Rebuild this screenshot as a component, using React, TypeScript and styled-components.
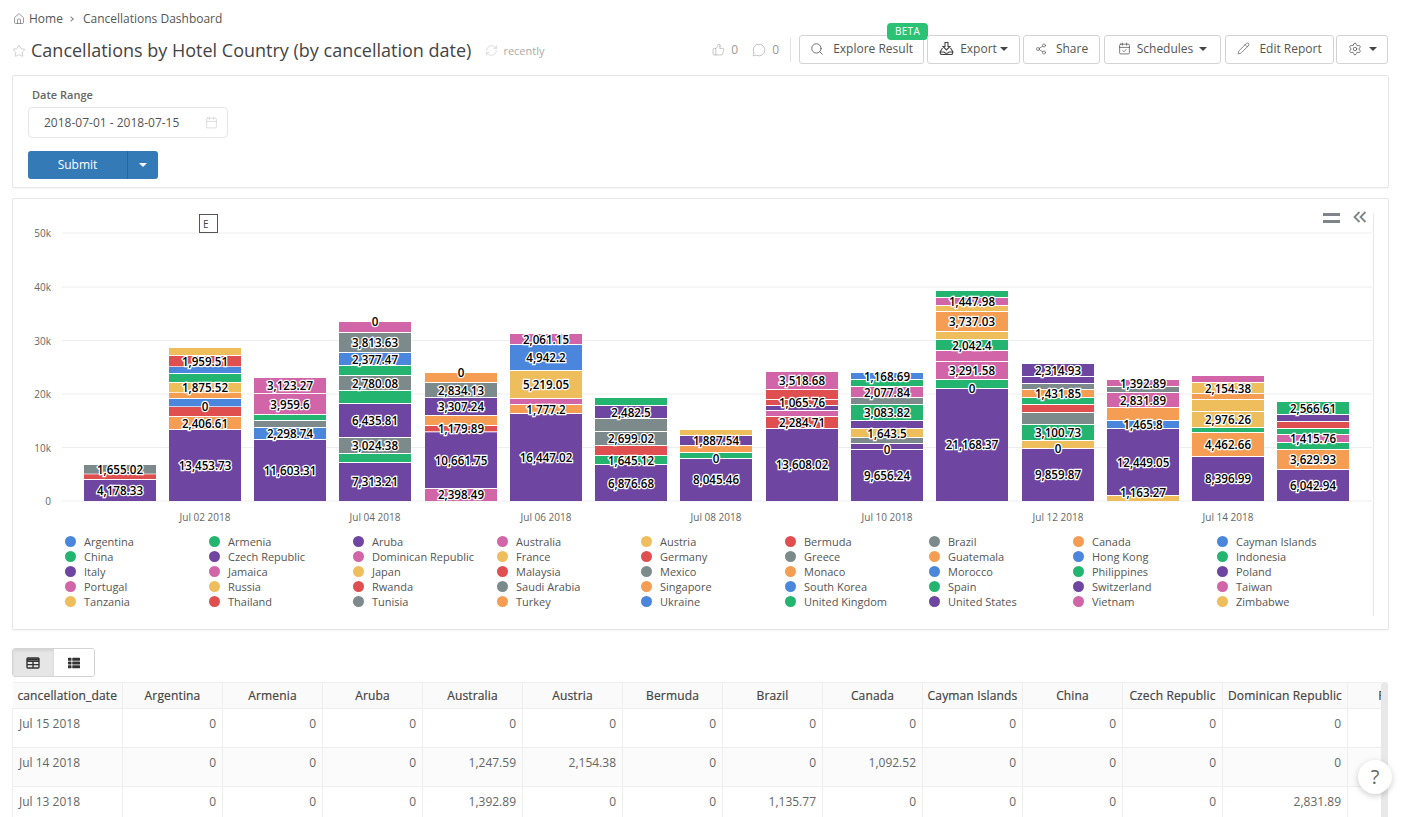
import React from "react";
import styled, { createGlobalStyle } from "styled-components";
import {
  Calendar,
  CalendarCheck,
  Home,
  MessageCircle,
  Pencil,
  RefreshCw,
  Search,
  Settings,
  Share2,
  Star,
  ThumbsUp,
} from "lucide-react";
import { FaThList } from "react-icons/fa";

const colors: Record<string, string> = {
  b: "#4a86dc",
  g: "#23b56f",
  p: "#6e45a0",
  k: "#d264a8",
  y: "#efbe5c",
  r: "#e04f4f",
  s: "#7c8a8c",
  o: "#f59d52",
};
const cycle = ["b", "g", "p", "k", "y", "r", "s", "o"];

const countries = [
  "Argentina", "Armenia", "Aruba", "Australia", "Austria", "Bermuda", "Brazil", "Canada", "Cayman Islands",
  "China", "Czech Republic", "Dominican Republic", "France", "Germany", "Greece", "Guatemala", "Hong Kong", "Indonesia",
  "Italy", "Jamaica", "Japan", "Malaysia", "Mexico", "Monaco", "Morocco", "Philippines", "Poland",
  "Portugal", "Russia", "Rwanda", "Saudi Arabia", "Singapore", "South Korea", "Spain", "Switzerland", "Taiwan",
  "Tanzania", "Thailand", "Tunisia", "Turkey", "Ukraine", "United Kingdom", "United States", "Vietnam", "Zimbabwe",
];

const barX = [84, 169, 254, 339, 425, 510, 595, 680, 766, 851, 936, 1022, 1107, 1192, 1277];

// color, top, bottom, label, label center (all y in 3x units from y=280)
type Seg = [string, number, number, string?, number?];

const bars: Seg[][] = [
  [["s", 555, 581, "1,655.02"], ["r", 583, 597], ["p", 600, 663, "4,178.33"]],
  [["y", 204, 225], ["r", 228, 259, "1,959.51"], ["b", 261, 279], ["g", 282, 306], ["y", 309, 337, "1,875.52"], ["o", 339, 354], ["b", 357, 379, "0", 379], ["r", 381, 408], ["o", 411, 447, "2,406.61", 430], ["p", 450, 663, "13,453.73", 556]],
  [["k", 294, 339, "3,123.27"], ["k", 342, 402, "3,959.6"], ["g", 405, 420], ["s", 423, 441], ["b", 444, 477, "2,298.74"], ["p", 480, 663, "11,603.31"]],
  [["k", 126, 156, "0", 124], ["s", 159, 216, "3,813.63"], ["b", 219, 255, "2,377.47"], ["g", 258, 285], ["s", 288, 330, "2,780.08"], ["g", 333, 369], ["p", 372, 471, "6,435.81"], ["s", 474, 519, "3,024.38"], ["g", 522, 546], ["p", 549, 663, "7,313.21", 604]],
  [["o", 279, 306, "0", 277], ["s", 309, 351, "2,834.13", 331], ["p", 354, 405, "3,307.24", 378], ["o", 408, 435], ["r", 438, 454, "1,179.89", 446], ["p", 457, 624, "10,661.75", 541], ["k", 627, 663, "2,398.49", 642]],
  [["k", 162, 192, "2,061.15"], ["b", 195, 270, "4,942.2"], ["y", 273, 354, "5,219.05"], ["k", 357, 372], ["o", 375, 399, "1,777.2"], ["p", 402, 663, "16,447.02"]],
  [["g", 354, 375], ["p", 378, 414, "2,482.5"], ["s", 417, 453], ["s", 456, 495, "2,699.02"], ["r", 498, 525], ["g", 528, 552, "1,645.12"], ["p", 555, 663, "6,876.68"]],
  [["y", 450, 465], ["p", 468, 495, "1,887.54"], ["o", 498, 516], ["g", 519, 534, "0", 535], ["p", 537, 663, "8,045.46", 598]],
  [["k", 276, 327, "3,518.68"], ["r", 330, 357], ["r", 360, 375, "1,065.76"], ["p", 378, 390], ["k", 393, 408], ["r", 411, 444, "2,284.71", 427], ["p", 447, 663, "13,608.02", 552]],
  [["b", 279, 297, "1,168.69"], ["g", 300, 318], ["k", 321, 351, "2,077.84"], ["s", 354, 372], ["g", 375, 420, "3,083.82"], ["p", 423, 444], ["y", 447, 471, "1,643.5"], ["s", 474, 489], ["p", 492, 507, "0", 508], ["p", 510, 663, "9,656.24", 585]],
  [["g", 33, 51], ["k", 54, 75, "1,447.98", 63], ["y", 78, 93], ["o", 96, 153, "3,737.03"], ["y", 156, 177], ["g", 180, 210, "2,042.4"], ["k", 213, 243], ["k", 246, 297, "3,291.58"], ["g", 300, 324, "0", 325], ["p", 327, 663, "21,168.37", 492]],
  [["p", 252, 288, "2,314.93"], ["p", 291, 309], ["s", 312, 327], ["o", 330, 351, "1,431.85"], ["g", 354, 372], ["r", 375, 396], ["s", 399, 432], ["g", 435, 480, "3,100.73"], ["y", 483, 504, "0", 505], ["p", 507, 663, "9,859.87", 582]],
  [["k", 300, 318, "1,392.89", 310], ["s", 321, 336], ["k", 339, 381, "2,831.89"], ["o", 384, 420], ["b", 423, 444, "1,465.8"], ["p", 447, 645, "12,449.05", 546], ["y", 648, 663, "1,163.27", 638]],
  [["k", 288, 306], ["y", 309, 339, "2,154.38"], ["o", 342, 357], ["y", 360, 393], ["y", 396, 441, "2,976.26"], ["g", 444, 456], ["o", 459, 528, "4,462.66"], ["p", 531, 663, "8,396.99", 595]],
  [["g", 366, 402, "2,566.61"], ["p", 405, 423], ["r", 426, 444], ["g", 447, 462], ["k", 465, 486, "1,415.76"], ["g", 489, 507], ["o", 510, 567, "3,629.93"], ["p", 570, 663, "6,042.94", 615]],
];

const yTicks: [string, number][] = [["50k", 233], ["40k", 287], ["30k", 340.5], ["20k", 394], ["10k", 447.5], ["0", 501]];

const columns = [
  "cancellation_date", "Argentina", "Armenia", "Aruba", "Australia", "Austria", "Bermuda", "Brazil",
  "Canada", "Cayman Islands", "China", "Czech Republic", "Dominican Republic", "France",
];
const colWidths = [110, 100, 100, 100, 100, 100, 100, 100, 100, 100, 100, 100, 125, 100];
const rows = [
  ["Jul 15 2018", "0", "0", "0", "0", "0", "0", "0", "0", "0", "0", "0", "0"],
  ["Jul 14 2018", "0", "0", "0", "1,247.59", "2,154.38", "0", "0", "1,092.52", "0", "0", "0", "0"],
  ["Jul 13 2018", "0", "0", "0", "1,392.89", "0", "0", "1,135.77", "0", "0", "0", "0", "2,831.89"],
];

const GlobalStyle = createGlobalStyle`
  html, body {
    margin: 0;
    height: 100%;
    overflow: hidden;
    background: #fff;
    font-family: "Open Sans", "Liberation Sans", sans-serif;
    font-size: 12px;
    color: #555;
  }
  * { box-sizing: border-box; }
`;

const Page = styled.div`
  position: relative;
  width: 1403px;
  height: 817px;
  overflow: hidden;
  padding: 11px 14px 0 12px;
`;

const Breadcrumb = styled.div`
  height: 16px;
  display: flex;
  align-items: center;
  color: #555;
  svg { color: #666; margin: 0 4px 0 1px; }
`;

const Crumb = styled.span`
  line-height: 16px;
`;

const CrumbSep = styled.span`
  width: 4px;
  height: 4px;
  margin: 0 10px 0 6px;
  border-top: 1px solid #888;
  border-right: 1px solid #888;
  transform: rotate(45deg);
`;

const TitleRow = styled.div`
  height: 29px;
  margin-top: 8px;
  display: flex;
  align-items: center;
  justify-content: space-between;
`;

const TitleGroup = styled.div`
  display: flex;
  align-items: center;
  padding-top: 2px;
`;

const Title = styled.h1`
  margin: 0 14px 0 5px;
  font-size: 18px;
  font-weight: 400;
  line-height: 27px;
  color: #444;
`;

const Recently = styled.span`
  margin-left: 5px;
  font-size: 11px;
  color: #aaa;
`;

const Actions = styled.div`
  display: flex;
  align-items: center;
  padding-right: 1px;
`;

const Stat = styled.span<{ $gap: number }>`
  display: flex;
  align-items: center;
  gap: 6px;
  margin-right: ${(p) => p.$gap}px;
  color: #999;
  font-size: 12px;
`;

const VDivider = styled.span`
  width: 1px;
  height: 24px;
  background: #e0e0e0;
  margin-right: 8px;
`;

const Btn = styled.button<{ $w: number; $gap?: number }>`
  position: relative;
  width: ${(p) => p.$w}px;
  height: 29px;
  margin-right: ${(p) => p.$gap ?? 4}px;
  padding: 0 0 2px;
  display: flex;
  align-items: center;
  justify-content: center;
  gap: 6px;
  background: #fff;
  border: 1px solid #d4d4d4;
  border-radius: 3px;
  color: #555;
  font: 400 12px "Open Sans", sans-serif;
  &:last-child { margin-right: 0; }
`;

const Badge = styled.span`
  position: absolute;
  top: -13px;
  right: -5px;
  width: 41px;
  height: 17px;
  border-radius: 4px;
  background: #2bc275;
  color: #fff;
  font-size: 10px;
  line-height: 17px;
  letter-spacing: 0.3px;
  text-align: center;
`;

const Caret = styled.span<{ $color?: string; $ml?: number }>`
  width: 0;
  height: 0;
  margin-left: ${(p) => p.$ml ?? 0}px;
  border-left: 4px solid transparent;
  border-right: 4px solid transparent;
  border-top: 4px solid ${(p) => p.$color ?? "#444"};
`;

const Card = styled.section`
  position: relative;
  border: 1px solid #e6e6e6;
  border-radius: 2px;
  background: #fff;
  box-shadow: 0 1px 2px rgba(0, 0, 0, 0.04);
`;

const FilterCard = styled(Card)`
  height: 113px;
  margin-top: 11px;
  padding: 12px 15px;
`;

const FieldLabel = styled.label`
  display: block;
  height: 14px;
  margin: 0 0 5px 4px;
  font-size: 11px;
  line-height: 14px;
  font-weight: 600;
  color: #666;
`;

const DateInput = styled.div`
  width: 200px;
  height: 31px;
  padding: 0 9px 1px 15px;
  display: flex;
  align-items: center;
  justify-content: space-between;
  border: 1px solid #e6e6e6;
  border-radius: 4px;
  color: #555;
  svg { color: #ccc; }
`;

const SubmitGroup = styled.div`
  width: 130px;
  height: 28px;
  margin-top: 13px;
  display: flex;
  border-radius: 3px;
  overflow: hidden;
  background: #337ab7;
  color: #fff;
`;

const SubmitLabel = styled.span`
  width: 100px;
  line-height: 28px;
  text-align: center;
  border-right: 1px solid #2a659a;
`;

const SubmitCaret = styled.span`
  flex: 1;
  display: flex;
  align-items: center;
  justify-content: center;
`;

const ChartCard = styled(Card)`
  height: 432px;
  margin-top: 10px;
`;

const ChartSvg = styled.svg`
  display: block;
  width: 1375px;
  height: 335px;
`;

const BarLabel = styled.text`
  font-family: "Open Sans", sans-serif;
  font-size: 11.6px;
  font-weight: 600;
  fill: #000;
  stroke: #fff;
  stroke-width: 2.5px;
  paint-order: stroke;
  text-anchor: middle;
  dominant-baseline: central;
`;

const AxisLabel = styled.text`
  font-family: "Open Sans", sans-serif;
  font-size: 10px;
  fill: #666;
  dominant-baseline: central;
`;

const Legend = styled.ul`
  list-style: none;
  margin: 0;
  padding: 0 0 0 52px;
  display: grid;
  grid-template-columns: repeat(9, 144px);
  grid-auto-rows: 15px;
`;

const LegendItem = styled.li`
  display: flex;
  align-items: center;
  gap: 8px;
  font-size: 11px;
  color: #555;
  white-space: nowrap;
`;

const Dot = styled.span<{ $color: string }>`
  width: 11px;
  height: 11px;
  border-radius: 50%;
  background: ${(p) => p.$color};
`;

const Splitter = styled.div`
  position: absolute;
  left: 1360px;
  top: 14px;
  bottom: 13px;
  width: 1px;
  background: #e8e8e8;
`;

const ChartTools = styled.div`
  position: absolute;
  top: 12px;
  right: 21px;
  display: flex;
  align-items: flex-start;
  gap: 13px;
`;

const Bars = styled.span`
  width: 17px;
  height: 10px;
  margin-top: 2px;
  border-top: 3px solid #7d8588;
  border-bottom: 3px solid #7d8588;
`;

const Marker = styled.div`
  position: absolute;
  left: 186px;
  top: 15px;
  width: 19px;
  height: 19px;
  padding-left: 3px;
  border: 1px solid #555;
  background: #fff;
  font-size: 10px;
  line-height: 19px;
  color: #444;
`;

const ViewTabs = styled.div`
  width: 83px;
  height: 29px;
  margin-top: 18px;
  display: flex;
  border: 1px solid #d4d4d4;
  border-radius: 3px;
  overflow: hidden;
`;

const ViewTab = styled.span<{ $active?: boolean }>`
  flex: 1;
  display: flex;
  align-items: center;
  justify-content: center;
  background: ${(p) => (p.$active ? "#e6e6e6" : "#fff")};
  box-shadow: ${(p) => (p.$active ? "inset 0 2px 3px rgba(0,0,0,0.08)" : "none")};
  color: #333;
`;

const TableArea = styled.div`
  margin-top: 5px;
  display: flex;
`;

const TableClip = styled.div`
  width: 1369px;
  height: 141px;
  overflow: hidden;
`;

const Table = styled.table`
  width: 1435px;
  table-layout: fixed;
  border-collapse: collapse;
`;

const Th = styled.th`
  height: 26px;
  padding: 0 2px;
  background: #fafafa;
  border: 1px solid #eee;
  border-left: none;
  font-size: 12px;
  font-weight: 400;
  letter-spacing: 0.15px;
  color: #444;
  text-align: center;
  white-space: nowrap;
  overflow: hidden;
  -webkit-text-stroke: 0.2px #444;
`;

const Tr = styled.tr<{ $alt?: boolean }>`
  background: ${(p) => (p.$alt ? "#fbfbfb" : "#fff")};
`;

const Td = styled.td<{ $first?: boolean }>`
  height: 39px;
  padding: 6px 6px 0 6px;
  border: 1px solid #eee;
  border-left: ${(p) => (p.$first ? "1px solid #eee" : "none")};
  vertical-align: top;
  text-align: ${(p) => (p.$first ? "left" : "right")};
  font-size: 12px;
  line-height: 18px;
  color: #666;
`;

const ScrollTrack = styled.div`
  width: 7px;
  height: 141px;
  background: #e8e8e8;
  border-radius: 3px 3px 0 0;
`;

const Help = styled.div`
  position: absolute;
  left: 1358px;
  top: 760px;
  width: 34px;
  height: 34px;
  border-radius: 50%;
  background: #fff;
  box-shadow: 0 2px 6px rgba(0, 0, 0, 0.2);
  font-size: 20px;
  line-height: 34px;
  text-align: center;
  color: #666;
`;

function ExportIcon() {
  return (
    <svg width="15" height="15" viewBox="0 0 15 15" fill="none" stroke="#444" strokeWidth="1.1">
      <path d="M6 1.5h3v4h2L7.5 9 4 5.5h2z" />
      <path d="M3.5 7L1 11l1 2.5h11l1-2.5-2.5-4M1 11h4l1.5 1.2h2L10 11h4" />
    </svg>
  );
}

function TableIcon() {
  return (
    <svg width="14" height="12" viewBox="0 0 14 12" fill="none" stroke="#333" strokeWidth="1.4">
      <rect x="1" y="1" width="12" height="10" rx="1" />
      <path d="M1 4.2h12M1 7.6h12M7 4v7" />
      <path d="M1 2.6h12" strokeWidth="2" />
    </svg>
  );
}

function Chart() {
  return (
    <ChartSvg viewBox="13 199 1375 335">
      {yTicks.map(([t, y]) => (
        <g key={t}>
          <line x1={62} x2={1372} y1={y} y2={y} stroke="#eee" />
          <AxisLabel x={51} y={y} textAnchor="end">
            {t}
          </AxisLabel>
        </g>
      ))}
      {bars.map((segs, i) => (
        <g key={i}>
          {segs.map(([c, top, bottom], j) => (
            <rect key={j} x={barX[i]} y={280 + top / 3} width={72} height={(bottom - top) / 3} fill={colors[c]} />
          ))}
        </g>
      ))}
      {bars.map((segs, i) => {
        const x = barX[i] + 36;
        return (
          <g key={i}>
            {segs.map(([, top, bottom, label, at], j) =>
              label ? (
                <BarLabel key={j} x={x} y={280 + (at ?? (top + bottom) / 2) / 3}>
                  {label}
                </BarLabel>
              ) : null
            )}
            {i % 2 === 1 && (
              <AxisLabel x={x} y={517} textAnchor="middle">
                {`Jul ${String(i + 1).padStart(2, "0")} 2018`}
              </AxisLabel>
            )}
          </g>
        );
      })}
    </ChartSvg>
  );
}

export default function App() {
  return (
    <Page>
      <GlobalStyle />
      <Breadcrumb>
        <Home size={12} strokeWidth={1.3} />
        <Crumb>Home</Crumb>
        <CrumbSep />
        <Crumb>Cancellations Dashboard</Crumb>
      </Breadcrumb>

      <TitleRow>
        <TitleGroup>
          <Star size={14} strokeWidth={1.2} color="#bbb" />
          <Title>Cancellations by Hotel Country (by cancellation date)</Title>
          <RefreshCw size={13} strokeWidth={1.2} color="#ccc" />
          <Recently>recently</Recently>
        </TitleGroup>
        <Actions>
          <Stat $gap={14}>
            <ThumbsUp size={13} strokeWidth={1} />0
          </Stat>
          <Stat $gap={11}>
            <MessageCircle size={14} strokeWidth={1} />0
          </Stat>
          <VDivider />
          <Btn $w={125} $gap={3}>
            <Search size={14} strokeWidth={1.4} />
            &nbsp;Explore Result
            <Badge>BETA</Badge>
          </Btn>
          <Btn $w={93} $gap={3}>
            <ExportIcon />
            Export
            <Caret $ml={-3} />
          </Btn>
          <Btn $w={77}>
            <Share2 size={12} strokeWidth={1.3} />
            &nbsp;Share
          </Btn>
          <Btn $w={117}>
            <CalendarCheck size={13} strokeWidth={1.4} />
            Schedules
            <Caret />
          </Btn>
          <Btn $w={109} $gap={2}>
            <Pencil size={13} strokeWidth={1.3} />
            &nbsp;Edit Report
          </Btn>
          <Btn $w={52}>
            <Settings size={14} strokeWidth={1.3} />
            <Caret $ml={1} />
          </Btn>
        </Actions>
      </TitleRow>

      <FilterCard>
        <FieldLabel>Date Range</FieldLabel>
        <DateInput>
          2018-07-01 - 2018-07-15
          <Calendar size={13} strokeWidth={1.2} />
        </DateInput>
        <SubmitGroup>
          <SubmitLabel>Submit</SubmitLabel>
          <SubmitCaret>
            <Caret $color="#fff" />
          </SubmitCaret>
        </SubmitGroup>
      </FilterCard>

      <ChartCard>
        <Chart />
        <Legend>
          {countries.map((name, i) => (
            <LegendItem key={name}>
              <Dot $color={colors[cycle[i % 8]]} />
              {name}
            </LegendItem>
          ))}
        </Legend>
        <Marker>E</Marker>
        <Splitter />
        <ChartTools>
          <Bars />
          <svg width="14" height="12" viewBox="0 0 14 12" fill="none" stroke="#7d8588" strokeWidth="1.8">
            <path d="M6.5 1L1.5 6l5 5M12.5 1l-5 5 5 5" />
          </svg>
        </ChartTools>
      </ChartCard>

      <ViewTabs>
        <ViewTab $active>
          <TableIcon />
        </ViewTab>
        <ViewTab>
          <FaThList size={12} />
        </ViewTab>
      </ViewTabs>

      <TableArea>
        <TableClip>
          <Table>
            <colgroup>
              {colWidths.map((w, i) => (
                <col key={i} width={w} />
              ))}
            </colgroup>
            <thead>
              <tr>
                {columns.map((c) => (
                  <Th key={c}>{c}</Th>
                ))}
              </tr>
            </thead>
            <tbody>
              {rows.map((r, i) => (
                <Tr key={r[0]} $alt={i === 1}>
                  {r.map((v, j) => (
                    <Td key={j} $first={j === 0}>
                      {v}
                    </Td>
                  ))}
                  <Td />
                </Tr>
              ))}
            </tbody>
          </Table>
        </TableClip>
        <ScrollTrack />
      </TableArea>

      <Help>?</Help>
    </Page>
  );
}
